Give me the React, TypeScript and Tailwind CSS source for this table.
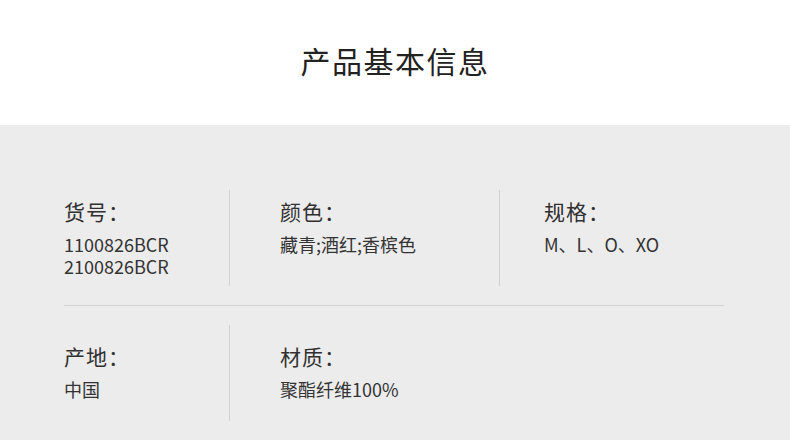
const font = { fontFamily: '"Noto Sans CJK SC", "Noto Sans", sans-serif' }

function Cell({ label, values, className }: { label: string; values: string[]; className: string }) {
  return (
    <div className={className}>
      <div className="text-[21px] leading-[24px] tracking-[1px] text-[#303030]">{label}</div>
      <p className="mt-[10px] text-[18px] leading-[22px] text-[#333333]">
        {values.map((v, i) => (
          <span key={v}>
            {i > 0 && <br />}
            {v}
          </span>
        ))}
      </p>
    </div>
  )
}

export default function App() {
  return (
    <div className="w-[790px] h-[440px] overflow-hidden" style={font}>
      <div className="h-[125px] bg-white flex items-center justify-center">
        <h1 className="text-[30px] leading-none tracking-[1.5px] text-[#222222] pb-[5px]">产品基本信息</h1>
      </div>
      <div className="h-[315px] bg-[#ececec] px-[64px] pt-[65px]">
        <div className="flex h-[96px]">
          <Cell label="货号：" values={['1100826BCR', '2100826BCR']} className="w-[165px] pt-[9px]" />
          <div className="w-px bg-[#d2d2d2]" />
          <Cell label="颜色：" values={['藏青;酒红;香槟色']} className="w-[269px] pl-[50px] pt-[9px]" />
          <div className="w-px bg-[#d2d2d2]" />
          <Cell label="规格：" values={['M、L、O、XO']} className="flex-1 pl-[44px] pt-[9px]" />
        </div>
        <div className="my-[19px] h-px w-[660px] bg-[#d2d2d2]" />
        <div className="flex h-[96px]">
          <Cell label="产地：" values={['中国']} className="w-[165px] pt-[19px]" />
          <div className="w-px bg-[#d2d2d2]" />
          <Cell label="材质：" values={['聚酯纤维100%']} className="w-[269px] pl-[50px] pt-[19px]" />
        </div>
      </div>
    </div>
  )
}
